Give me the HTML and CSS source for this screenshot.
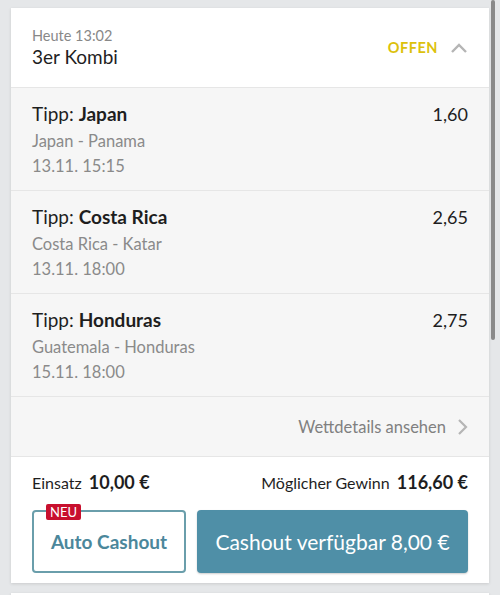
FILE: index.html
```html
<!DOCTYPE html>
<html lang="de">
<head>
    <meta charset="UTF-8">
    <meta name="viewport" content="width=device-width, initial-scale=1.0">
    <title>Meine Wetten</title>
    <link rel="stylesheet" href="styles.css">
</head>
<body>
    <div class="scrollbar"></div>

    <div class="card">
        <div class="head">
            <div>
                <div class="time">Heute 13:02</div>
                <div class="kind">3er Kombi</div>
            </div>
            <div class="status">
                <span>OFFEN</span>
                <svg width="18" height="12" viewBox="0 0 18 12"><path d="M2 10 L9 3 L16 10" fill="none" stroke="#b5b5b5" stroke-width="2.4"/></svg>
            </div>
        </div>

        <div class="leg">
            <div class="info">
                <div class="tip">Tipp: <b>Japan</b></div>
                <div class="sub">Japan - Panama</div>
                <div class="sub">13.11. 15:15</div>
            </div>
            <div class="odds">1,60</div>
        </div>
        <div class="leg">
            <div class="info">
                <div class="tip">Tipp: <b>Costa Rica</b></div>
                <div class="sub">Costa Rica - Katar</div>
                <div class="sub">13.11. 18:00</div>
            </div>
            <div class="odds">2,65</div>
        </div>
        <div class="leg">
            <div class="info">
                <div class="tip">Tipp: <b>Honduras</b></div>
                <div class="sub">Guatemala - Honduras</div>
                <div class="sub">15.11. 18:00</div>
            </div>
            <div class="odds">2,75</div>
        </div>

        <div class="details">
            <span>Wettdetails ansehen</span>
            <svg width="12" height="18" viewBox="0 0 12 18"><path d="M3 2 L10 9 L3 16" fill="none" stroke="#b5b5b5" stroke-width="2.2"/></svg>
        </div>

        <div class="foot">
            <div class="sums">
                <div>Einsatz <b>10,00 €</b></div>
                <div>Möglicher Gewinn <b>116,60 €</b></div>
            </div>
            <div class="actions">
                <button class="auto">
                    <span class="badge">NEU</span>
                    Auto Cashout
                </button>
                <button class="cashout">Cashout verfügbar 8,00 €</button>
            </div>
        </div>
    </div>

    <div class="card next"></div>
</body>
</html>
```

FILE: styles.css
```css
body {
    margin: 0;
    background-color: #e5e7e9;
    font-family: Lato, "Open Sans", sans-serif;
    color: #1e1e1e;
}
.scrollbar {
    position: absolute;
    right: 5px;
    top: 0;
    width: 4px;
    height: 340px;
    background-color: #8a8a8a;
    border-radius: 2px;
}
.card {
    margin: 8px 11px 0 11px;
    background-color: #fff;
    box-shadow: 0 1px 3px rgba(0, 0, 0, 0.12);
}
.card.next {
    margin-top: 10px;
    height: 20px;
}
.head {
    display: flex;
    justify-content: space-between;
    align-items: center;
    height: 79px;
    padding: 0 21px;
    border-bottom: 1px solid #e6e6e6;
}
.time {
    font-size: 14.5px;
    color: #888;
}
.kind {
    font-size: 19px;
    margin-top: 1px;
}
.status {
    display: flex;
    align-items: center;
    gap: 12px;
    color: #dcc10c;
    font-weight: bold;
    font-size: 14.5px;
    letter-spacing: 0.5px;
}
.leg {
    display: flex;
    justify-content: space-between;
    height: 102px;
    padding: 0 21px;
    background-color: #f6f6f6;
    border-bottom: 1px solid #e6e6e6;
}
.info {
    padding-top: 14px;
}
.tip {
    font-size: 19px;
    margin-bottom: 4px;
}
.sub {
    font-size: 16.5px;
    color: #8a8a8a;
    line-height: 25px;
}
.odds {
    padding-top: 15px;
    font-size: 18px;
}
.details {
    display: flex;
    justify-content: flex-end;
    align-items: center;
    gap: 10px;
    height: 59px;
    padding: 0 21px;
    background-color: #f6f6f6;
    border-bottom: 1px solid #e6e6e6;
    font-size: 16.5px;
    color: #808080;
}
.foot {
    padding: 14px 21px 10px 21px;
}
.sums {
    display: flex;
    justify-content: space-between;
    font-size: 16px;
}
.sums b {
    font-size: 18px;
    margin-left: 3px;
}
.actions {
    display: flex;
    gap: 11px;
    margin-top: 17px;
}
button {
    font-family: inherit;
    height: 63px;
    border-radius: 4px;
    cursor: pointer;
}
.auto {
    position: relative;
    width: 154px;
    background-color: #fff;
    border: 2px solid #6a9eab;
    color: #4b879b;
    font-size: 19px;
    font-weight: bold;
}
.badge {
    position: absolute;
    left: 12px;
    top: -8px;
    padding: 0 4px;
    background-color: #c8102e;
    color: #fff;
    font-size: 13px;
    font-weight: normal;
    line-height: 16px;
    border-radius: 2px;
}
.cashout {
    flex: 1;
    border: none;
    background-color: #4f8fa7;
    color: #fff;
    font-size: 21px;
    box-shadow: 0 1px 2px rgba(0, 0, 0, 0.2);
}
```
